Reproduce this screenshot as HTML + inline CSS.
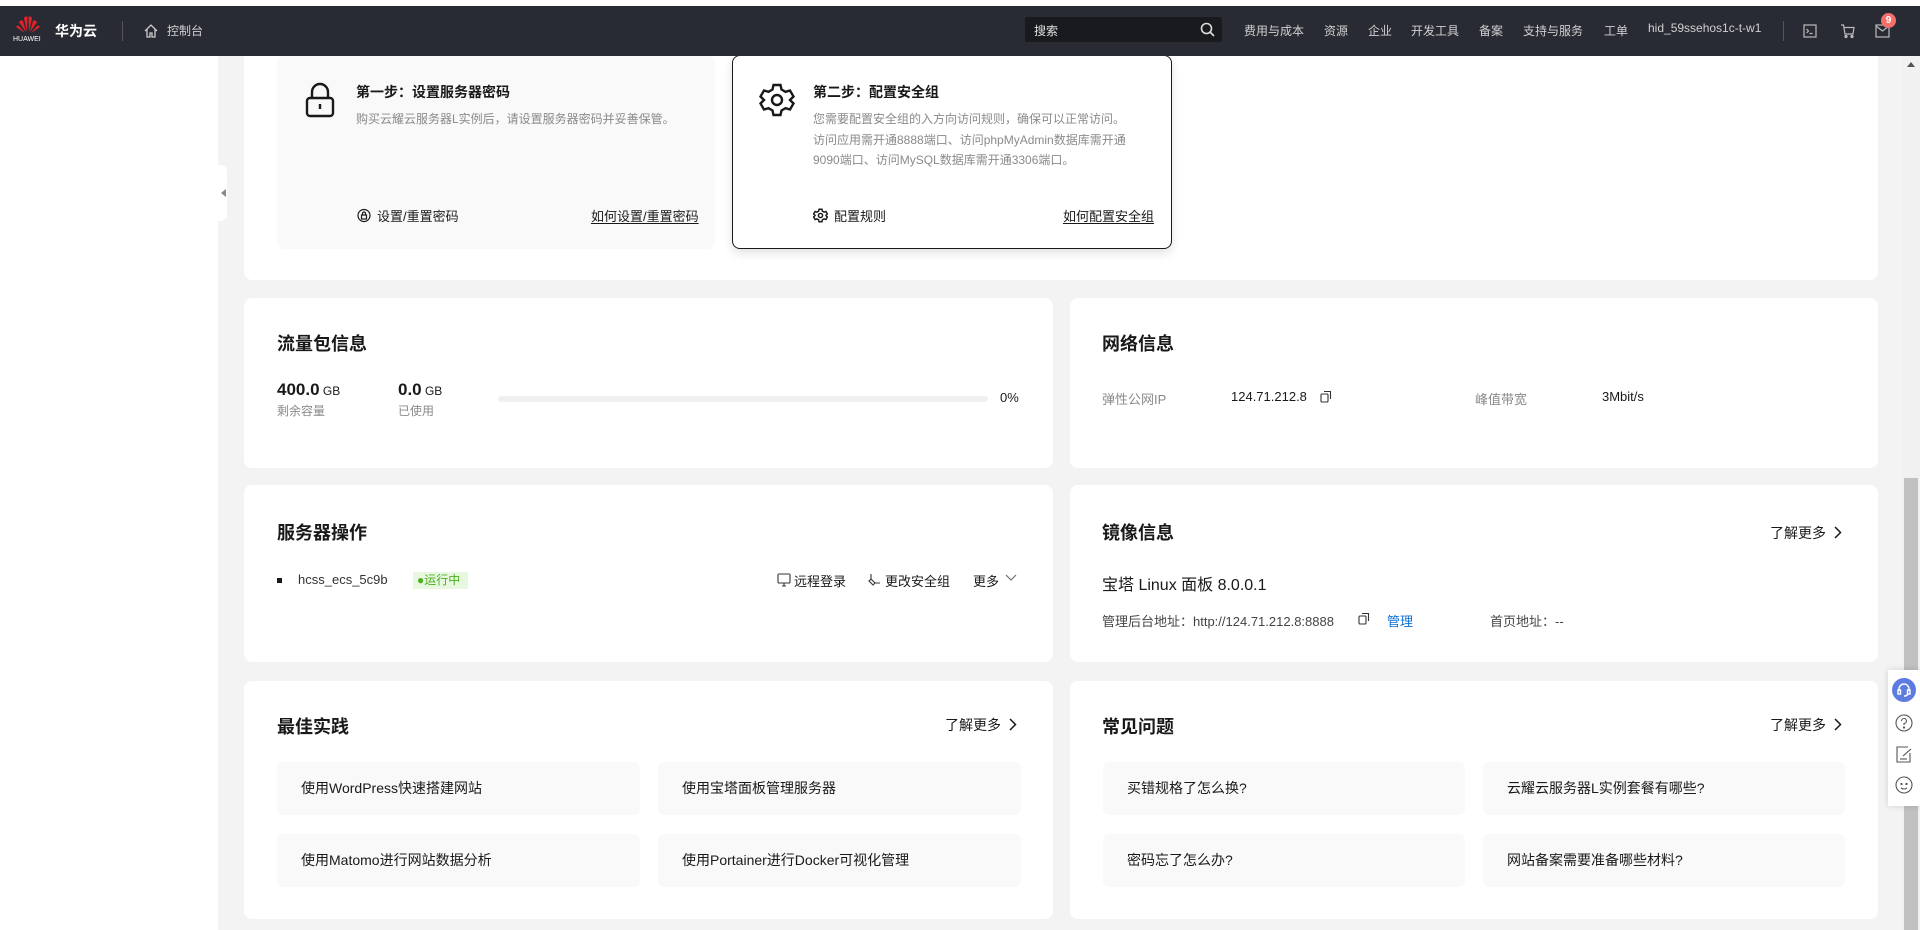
<!DOCTYPE html>
<html><head><meta charset="utf-8"><style>
*{margin:0;padding:0;box-sizing:border-box}
body{width:1920px;height:930px;overflow:hidden;background:#f3f3f3;font-family:"Liberation Sans","Noto Sans CJK SC",sans-serif;color:#191919;position:relative;font-size:14px}
.a{position:absolute;white-space:nowrap}
.nav{position:absolute;left:0;top:6px;width:1920px;height:50px;background:#282b33;color:#d0d0d0;font-size:13px;z-index:10}
.top{position:absolute;left:0;top:0;width:1920px;height:6px;background:#fff;z-index:10}
.side{position:absolute;left:0;top:56px;width:218px;height:874px;background:#fff}
.card{position:absolute;background:#fff;border-radius:8px}
.h{font-size:18px;font-weight:bold;color:#191919}
.g{color:#8a8a8a}
.item{position:absolute;background:#f9f9f9;border-radius:6px;font-size:14px;line-height:52px;padding-left:24px;color:#191919}
.more{font-size:14px}
u{text-underline-offset:2px}
</style></head><body>
<div class="top"></div>
<div class="nav">
 <svg class="a" style="left:15px;top:9px" width="26" height="20" viewBox="0 0 26 20"><g fill="#e3232c"><path d="M12 17 L9 3 Q11 0 12.5 2Z"/><path d="M14 17 L17 3 Q15 0 13.5 2Z"/><path d="M11 17 L4 7 Q6 4 8 6Z"/><path d="M15 17 L22 7 Q20 4 18 6Z"/><path d="M10 18 L1 12 Q2 10 4 11Z"/><path d="M16 18 L25 12 Q24 10 22 11Z"/></g></svg>
 <div class="a" style="left:13px;top:30px;font-size:7px;color:#fff">HUAWEI</div>
 <div class="a" style="left:55px;top:15px;font-size:14px;font-weight:bold;color:#fff">华为云</div>
 <div class="a" style="left:122px;top:15px;width:1px;height:20px;background:#555"></div>
 <svg class="a" style="left:143px;top:17px" width="16" height="16" viewBox="0 0 16 16" fill="none" stroke="#ccc" stroke-width="1.3"><path d="M2 8 L8 2 L14 8 M4 6.5 V14 H7 V10 H9 V14 H12 V6.5"/></svg>
 <div class="a" style="left:167px;top:16px;font-size:12px">控制台</div>
 <div class="a" style="left:1025px;top:11px;width:197px;height:25px;background:#191a1e;border-radius:2px"></div>
 <div class="a" style="left:1034px;top:16px;font-size:12px;color:#e0e0e0">搜索</div>
 <svg class="a" style="left:1200px;top:16px" width="15" height="15" viewBox="0 0 15 15" fill="none" stroke="#ddd" stroke-width="1.6"><circle cx="6.5" cy="6.5" r="5"/><path d="M10 10 L14 14"/></svg>
 <div class="a" style="left:1244px;top:16px;font-size:12px">费用与成本</div>
 <div class="a" style="left:1324px;top:16px;font-size:12px">资源</div>
 <div class="a" style="left:1368px;top:16px;font-size:12px">企业</div>
 <div class="a" style="left:1411px;top:16px;font-size:12px">开发工具</div>
 <div class="a" style="left:1479px;top:16px;font-size:12px">备案</div>
 <div class="a" style="left:1523px;top:16px;font-size:12px">支持与服务</div>
 <div class="a" style="left:1604px;top:16px;font-size:12px">工单</div>
 <div class="a" style="left:1648px;top:15px;font-size:12px">hid_59ssehos1c-t-w1</div>
 <div class="a" style="left:1783px;top:15px;width:1px;height:20px;background:#555"></div>
 <svg class="a" style="left:1803px;top:18px" width="14" height="14" viewBox="0 0 14 14" fill="none" stroke="#bbb" stroke-width="1.2"><rect x="1" y="1" width="12" height="12"/><path d="M3.5 5 L5.5 7 L3.5 9 M6.5 9.5 H9.5"/></svg>
 <svg class="a" style="left:1840px;top:17px" width="16" height="16" viewBox="0 0 16 16" fill="none" stroke="#bbb" stroke-width="1.2"><path d="M1 2 H3.5 L5 11 H13 L14 4.5 H4"/><circle cx="6" cy="13.5" r="1" fill="#bbb"/><circle cx="12" cy="13.5" r="1" fill="#bbb"/></svg>
 <svg class="a" style="left:1875px;top:18px" width="15" height="14" viewBox="0 0 15 14" fill="none" stroke="#bbb" stroke-width="1.2"><rect x="1" y="1" width="13" height="12"/><path d="M1 2 L7.5 7 L14 2"/></svg>
 <div class="a" style="left:1881px;top:7px;width:15px;height:15px;border-radius:50%;background:#f66f6a;color:#fff;font-size:10px;font-weight:bold;text-align:center;line-height:15px">9</div>
</div>
<div class="side"></div>
<div class="a" style="left:218px;top:165px;width:9px;height:56px;background:#fff;border-radius:0 6px 6px 0"></div>
<div class="a" style="left:221px;top:189px;width:0;height:0;border-top:4px solid transparent;border-bottom:4px solid transparent;border-right:5px solid #888"></div>
<!-- scrollbar -->
<div class="a" style="left:1902px;top:56px;width:18px;height:874px;background:#f1f1f1"></div>
<div class="a" style="left:1904px;top:478px;width:14px;height:452px;background:#c1c1c1"></div>
<div class="a" style="left:1907px;top:62px;width:0;height:0;border-left:4px solid transparent;border-right:4px solid transparent;border-bottom:5px solid #555"></div>

<!-- top card -->
<div class="card" style="left:244px;top:56px;width:1634px;height:224px;border-radius:0 0 8px 8px"></div>
<div class="a" style="left:277px;top:55px;width:438px;height:194px;background:#f9f9f9;border-radius:8px"></div>
<svg class="a" style="left:304px;top:82px" width="32" height="36" viewBox="0 0 32 36" fill="none" stroke="#191919" stroke-width="2.4"><path d="M8 16 V10 A8 8 0 0 1 24 10 V16"/><rect x="3" y="16" width="26" height="18" rx="3"/><path d="M16 22 V27"/></svg>
<div class="a" style="left:356px;top:82px;font-size:14px;font-weight:bold">第一步：设置服务器密码</div>
<div class="a g" style="left:356px;top:110px;font-size:12px">购买云耀云服务器L实例后，请设置服务器密码并妥善保管。</div>
<svg class="a" style="left:357px;top:208px" width="14" height="15" viewBox="0 0 14 15" fill="none" stroke="#191919" stroke-width="1.2"><circle cx="7" cy="7.5" r="6"/><rect x="4.5" y="7" width="5" height="4"/><path d="M5.5 7 V5.5 A1.5 1.5 0 0 1 8.5 5.5 V7"/></svg>
<div class="a" style="left:377px;top:206px;font-size:13px">设置/重置密码</div>
<div class="a" style="left:591px;top:206px;font-size:13px"><u>如何设置/重置密码</u></div>

<div class="a" style="left:732px;top:55px;width:440px;height:194px;background:#fff;border:1px solid #191919;border-radius:8px;box-shadow:0 4px 10px rgba(0,0,0,.12)"></div>
<svg class="a" style="left:759px;top:82px" width="36" height="36" viewBox="0 0 36 36" fill="none" stroke="#191919" stroke-width="2.4"><path d="M14.5 3 H21.5 L22.5 7.5 L26.5 9.8 L31 8.5 L34.5 14.5 L31 18 L34.5 21.5 L31 27.5 L26.5 26.2 L22.5 28.5 L21.5 33 H14.5 L13.5 28.5 L9.5 26.2 L5 27.5 L1.5 21.5 L5 18 L1.5 14.5 L5 8.5 L9.5 9.8 L13.5 7.5 Z"/><circle cx="18" cy="18" r="5"/></svg>
<div class="a" style="left:813px;top:82px;font-size:14px;font-weight:bold">第二步：配置安全组</div>
<div class="a g" style="left:813px;top:109px;font-size:12px;line-height:20px">您需要配置安全组的入方向访问规则，确保可以正常访问。</div>
<div class="a g" style="left:813px;top:130px;font-size:12px;line-height:20px">访问应用需开通8888端口、访问phpMyAdmin数据库需开通<br>9090端口、访问MySQL数据库需开通3306端口。</div>
<svg class="a" style="left:813px;top:208px" width="15" height="15" viewBox="0 0 36 36" fill="none" stroke="#191919" stroke-width="3.5"><path d="M14.5 3 H21.5 L22.5 7.5 L26.5 9.8 L31 8.5 L34.5 14.5 L31 18 L34.5 21.5 L31 27.5 L26.5 26.2 L22.5 28.5 L21.5 33 H14.5 L13.5 28.5 L9.5 26.2 L5 27.5 L1.5 21.5 L5 18 L1.5 14.5 L5 8.5 L9.5 9.8 L13.5 7.5 Z"/><circle cx="18" cy="18" r="5"/></svg>
<div class="a" style="left:834px;top:206px;font-size:13px">配置规则</div>
<div class="a" style="left:1063px;top:206px;font-size:13px"><u>如何配置安全组</u></div>

<!-- row 2 -->
<div class="card" style="left:244px;top:298px;width:809px;height:170px"></div>
<div class="a h" style="left:277px;top:330px">流量包信息</div>
<div class="a" style="left:277px;top:380px;font-size:17px;font-weight:bold">400.0<span style="font-size:12px;font-weight:normal"> GB</span></div>
<div class="a g" style="left:277px;top:402px;font-size:12px">剩余容量</div>
<div class="a" style="left:398px;top:380px;font-size:17px;font-weight:bold">0.0<span style="font-size:12px;font-weight:normal"> GB</span></div>
<div class="a g" style="left:398px;top:402px;font-size:12px">已使用</div>
<div class="a" style="left:498px;top:396px;width:490px;height:6px;background:#f0f0f0;border-radius:3px"></div>
<div class="a" style="left:1000px;top:390px;font-size:13px">0%</div>

<div class="card" style="left:1070px;top:298px;width:808px;height:170px"></div>
<div class="a h" style="left:1102px;top:330px">网络信息</div>
<div class="a g" style="left:1102px;top:389px;font-size:13px">弹性公网IP</div>
<div class="a" style="left:1231px;top:389px;font-size:13px">124.71.212.8</div>
<svg class="a" style="left:1320px;top:390px" width="12" height="13" viewBox="0 0 12 13" fill="none" stroke="#333" stroke-width="1.1"><rect x="1" y="4" width="7" height="8" rx="1"/><path d="M4 1.5 H10.5 V9"/></svg>
<div class="a g" style="left:1475px;top:389px;font-size:13px">峰值带宽</div>
<div class="a" style="left:1602px;top:389px;font-size:13px">3Mbit/s</div>

<!-- row 3 -->
<div class="card" style="left:244px;top:485px;width:809px;height:177px"></div>
<div class="a h" style="left:277px;top:519px">服务器操作</div>
<div class="a" style="left:277px;top:578px;width:5px;height:5px;background:#191919"></div>
<div class="a" style="left:298px;top:572px;font-size:13px;color:#333">hcss_ecs_5c9b</div>
<div class="a" style="left:413px;top:572px;width:55px;height:17px;background:#e8f8e0;color:#4db01e;font-size:12px;line-height:17px;padding-left:4px">●运行中</div>
<svg class="a" style="left:777px;top:573px" width="14" height="14" viewBox="0 0 14 14" fill="none" stroke="#333" stroke-width="1.1"><rect x="1" y="1" width="12" height="9" rx="1"/><path d="M5 13 H9 M7 10 V13"/></svg>
<div class="a" style="left:794px;top:571px;font-size:13px">远程登录</div>
<svg class="a" style="left:867px;top:573px" width="14" height="14" viewBox="0 0 14 14" fill="none" stroke="#333" stroke-width="1.1"><path d="M4 1 L4 6 L2 8 L6 12 L8 10 L13 10 M4 6 L8 10"/></svg>
<div class="a" style="left:885px;top:571px;font-size:13px">更改安全组</div>
<div class="a" style="left:973px;top:571px;font-size:13px">更多</div>
<svg class="a" style="left:1005px;top:574px" width="12" height="8" viewBox="0 0 12 8" fill="none" stroke="#666" stroke-width="1.1"><path d="M1 1 L6 6 L11 1"/></svg>

<div class="card" style="left:1070px;top:485px;width:808px;height:177px"></div>
<div class="a h" style="left:1102px;top:519px">镜像信息</div>
<div class="a more" style="left:1770px;top:523px">了解更多</div>
<svg class="a" style="left:1834px;top:526px" width="8" height="13" viewBox="0 0 8 13" fill="none" stroke="#191919" stroke-width="1.5"><path d="M1 1 L6.5 6.5 L1 12"/></svg>
<div class="a" style="left:1102px;top:571px;font-size:16px">宝塔 Linux 面板 8.0.0.1</div>
<div class="a" style="left:1102px;top:611px;font-size:13px;color:#444">管理后台地址：http://124.71.212.8:8888</div>
<svg class="a" style="left:1358px;top:612px" width="12" height="13" viewBox="0 0 12 13" fill="none" stroke="#333" stroke-width="1.1"><rect x="1" y="4" width="7" height="8" rx="1"/><path d="M4 1.5 H10.5 V9"/></svg>
<div class="a" style="left:1387px;top:611px;font-size:13px;color:#0a6fd8">管理</div>
<div class="a" style="left:1490px;top:611px;font-size:13px;color:#444">首页地址：--</div>

<!-- row 4 -->
<div class="card" style="left:244px;top:681px;width:809px;height:238px"></div>
<div class="a h" style="left:277px;top:713px">最佳实践</div>
<div class="a more" style="left:945px;top:715px">了解更多</div>
<svg class="a" style="left:1009px;top:718px" width="8" height="13" viewBox="0 0 8 13" fill="none" stroke="#191919" stroke-width="1.5"><path d="M1 1 L6.5 6.5 L1 12"/></svg>
<div class="item" style="left:277px;top:762px;width:363px;height:53px">使用WordPress快速搭建网站</div>
<div class="item" style="left:658px;top:762px;width:363px;height:53px">使用宝塔面板管理服务器</div>
<div class="item" style="left:277px;top:834px;width:363px;height:53px">使用Matomo进行网站数据分析</div>
<div class="item" style="left:658px;top:834px;width:363px;height:53px">使用Portainer进行Docker可视化管理</div>

<div class="card" style="left:1070px;top:681px;width:808px;height:238px"></div>
<div class="a h" style="left:1102px;top:713px">常见问题</div>
<div class="a more" style="left:1770px;top:715px">了解更多</div>
<svg class="a" style="left:1834px;top:718px" width="8" height="13" viewBox="0 0 8 13" fill="none" stroke="#191919" stroke-width="1.5"><path d="M1 1 L6.5 6.5 L1 12"/></svg>
<div class="item" style="left:1103px;top:762px;width:362px;height:53px">买错规格了怎么换?</div>
<div class="item" style="left:1483px;top:762px;width:362px;height:53px">云耀云服务器L实例套餐有哪些?</div>
<div class="item" style="left:1103px;top:834px;width:362px;height:53px">密码忘了怎么办?</div>
<div class="item" style="left:1483px;top:834px;width:362px;height:53px">网站备案需要准备哪些材料?</div>

<!-- floating panel -->
<div class="a" style="left:1888px;top:670px;width:32px;height:136px;background:#fff;box-shadow:0 0 6px rgba(0,0,0,.15)"></div>
<div class="a" style="left:1892px;top:678px;width:24px;height:24px;border-radius:50%;background:#5e7ce0"></div>
<svg class="a" style="left:1896px;top:682px" width="16" height="16" viewBox="0 0 16 16" fill="none" stroke="#fff" stroke-width="1.4"><path d="M3 9 V7 A5 5 0 0 1 13 7 V9"/><rect x="2" y="8" width="2.5" height="4"/><rect x="11.5" y="8" width="2.5" height="4"/><path d="M12 12 Q11 14 8 14"/></svg>
<svg class="a" style="left:1895px;top:714px" width="18" height="18" viewBox="0 0 18 18" fill="none" stroke="#555" stroke-width="1.1"><circle cx="9" cy="9" r="8"/><path d="M6.5 7 A2.5 2.5 0 1 1 9 9.5 V11"/><circle cx="9" cy="13.5" r=".6" fill="#555"/></svg>
<svg class="a" style="left:1896px;top:745px" width="16" height="18" viewBox="0 0 16 18" fill="none" stroke="#555" stroke-width="1.1"><path d="M12 2 H1 V17 H14 V8"/><path d="M7 11 L15 4"/><path d="M4 14 H11"/></svg>
<svg class="a" style="left:1895px;top:776px" width="18" height="18" viewBox="0 0 18 18" fill="none" stroke="#555" stroke-width="1.1"><circle cx="9" cy="9" r="8"/><circle cx="6.5" cy="8" r=".6" fill="#555"/><circle cx="11.5" cy="8" r=".6" fill="#555"/><path d="M6 12 Q9 14 12 12"/></svg>
</body></html>
